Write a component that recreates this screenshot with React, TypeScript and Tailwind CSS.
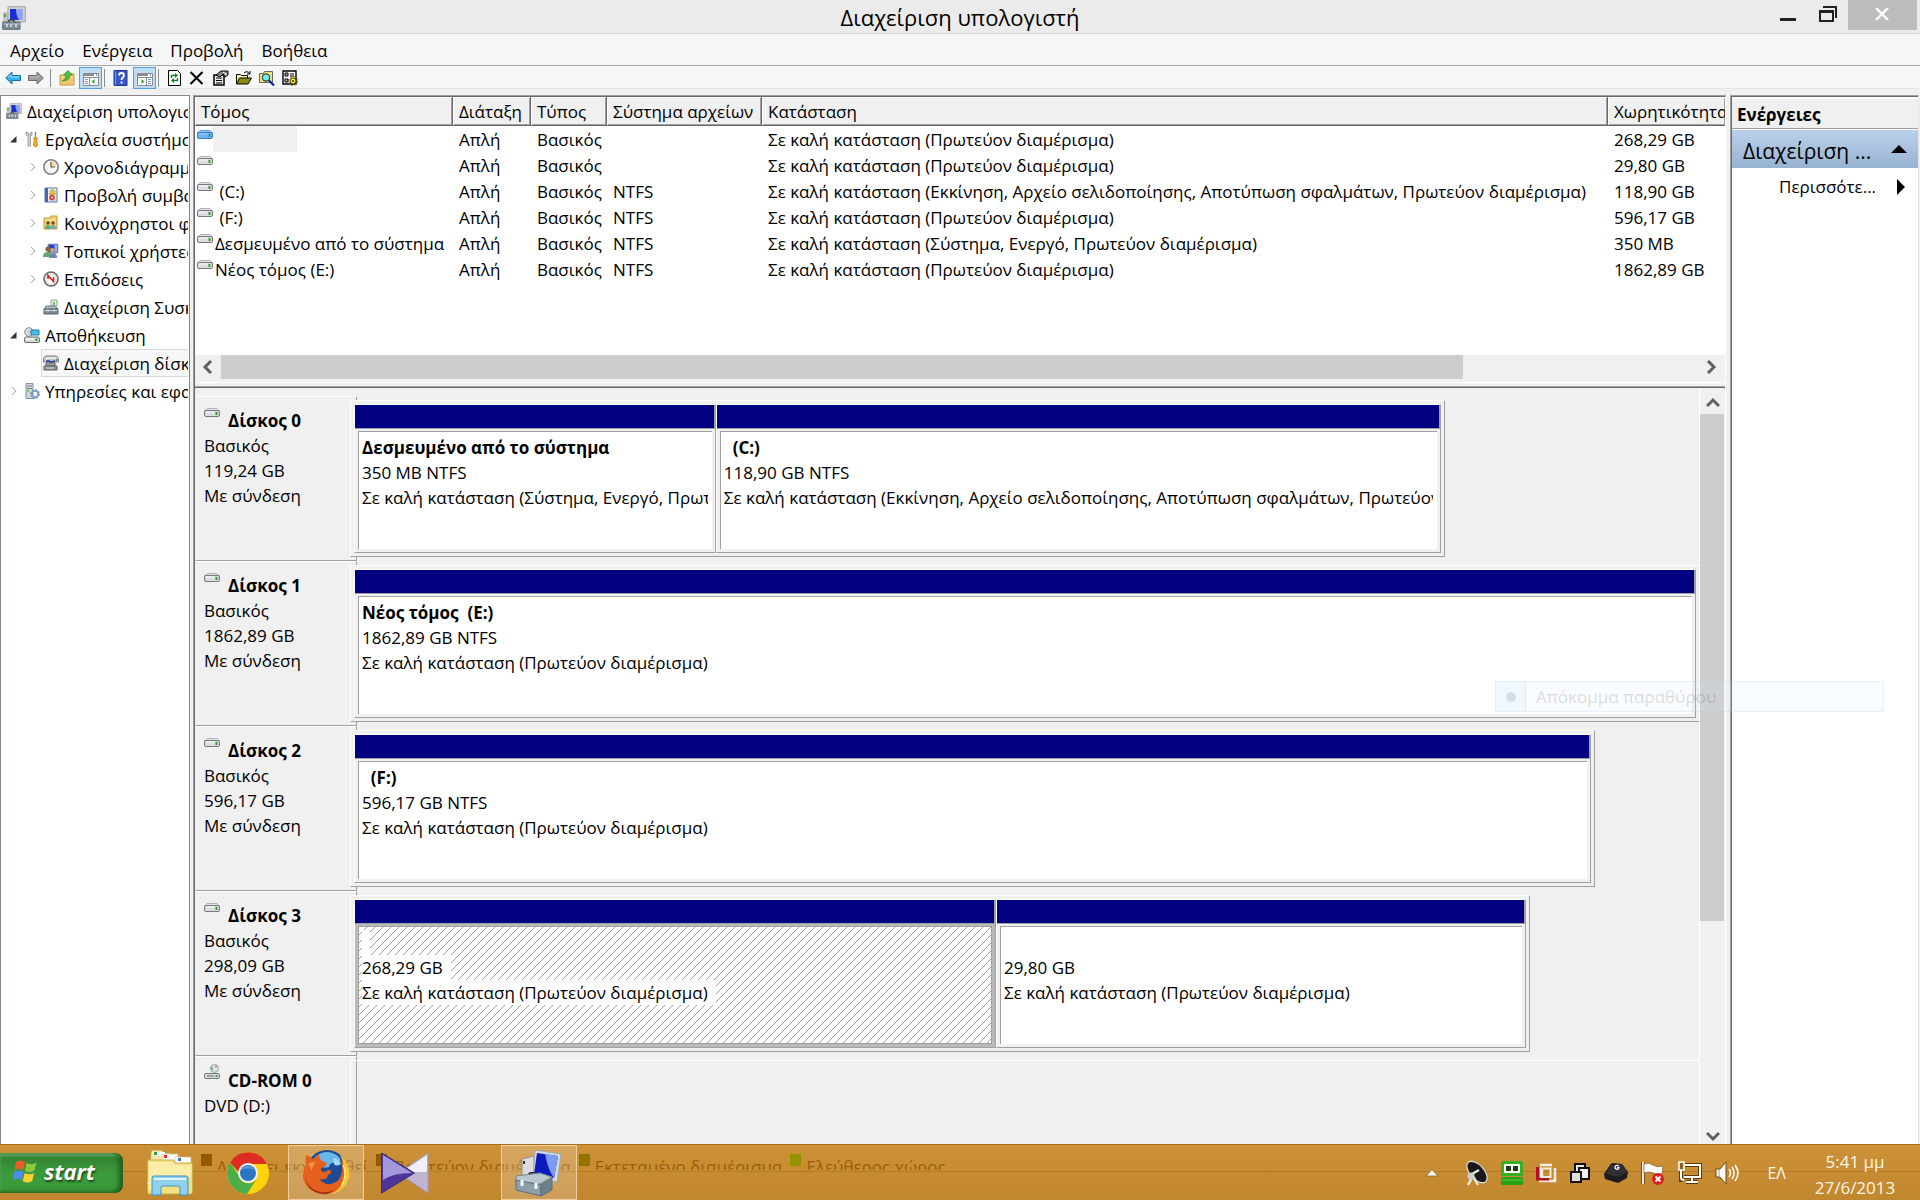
import React from 'react';

interface Volume {
  name: string;
  fs: string;
  status: string;
  capacity: string;
  selected?: boolean;
}

interface Partition {
  title: string;
  size: string;
  status: string;
  grow: number;
  selected?: boolean;
}

interface Disk {
  name: string;
  size: string;
  width: number;
  partitions: Partition[];
}

interface TreeItem {
  label: string;
  level: 0 | 1 | 2;
  expander?: 'open' | 'closed';
  icon: React.ReactNode;
  selected?: boolean;
}

const HEALTHY = 'Σε καλή κατάσταση (Πρωτεύον διαμέρισμα)';
const HEALTHY_BOOT = 'Σε καλή κατάσταση (Εκκίνηση, Αρχείο σελιδοποίησης, Αποτύπωση σφαλμάτων, Πρωτεύον διαμέρισμα)';
const HEALTHY_SYSTEM = 'Σε καλή κατάσταση (Σύστημα, Ενεργό, Πρωτεύον διαμέρισμα)';

const volumes: Volume[] = [
  { name: '', fs: '', status: HEALTHY, capacity: '268,29 GB', selected: true },
  { name: '', fs: '', status: HEALTHY, capacity: '29,80 GB' },
  { name: ' (C:)', fs: 'NTFS', status: HEALTHY_BOOT, capacity: '118,90 GB' },
  { name: ' (F:)', fs: 'NTFS', status: HEALTHY, capacity: '596,17 GB' },
  { name: 'Δεσμευμένο από το σύστημα', fs: 'NTFS', status: HEALTHY_SYSTEM, capacity: '350 MB' },
  { name: 'Νέος τόμος (E:)', fs: 'NTFS', status: HEALTHY, capacity: '1862,89 GB' },
];

// width is the share of the graphical view, in percent
const disks: Disk[] = [
  {
    name: 'Δίσκος 0',
    size: '119,24 GB',
    width: 81.2,
    partitions: [
      { title: 'Δεσμευμένο από το σύστημα', size: '350 MB NTFS', status: HEALTHY_SYSTEM, grow: 361 },
      { title: '  (C:)', size: '118,90 GB NTFS', status: HEALTHY_BOOT, grow: 726 },
    ],
  },
  {
    name: 'Δίσκος 1',
    size: '1862,89 GB',
    width: 100.1,
    partitions: [{ title: 'Νέος τόμος  (E:)', size: '1862,89 GB NTFS', status: HEALTHY, grow: 1 }],
  },
  {
    name: 'Δίσκος 2',
    size: '596,17 GB',
    width: 92.3,
    partitions: [{ title: '  (F:)', size: '596,17 GB NTFS', status: HEALTHY, grow: 1 }],
  },
  {
    name: 'Δίσκος 3',
    size: '298,09 GB',
    width: 87.5,
    partitions: [
      { title: '', size: '268,29 GB', status: HEALTHY, grow: 642, selected: true },
      { title: '', size: '29,80 GB', status: HEALTHY, grow: 530 },
    ],
  },
];

const columns = ['Τόμος', 'Διάταξη', 'Τύπος', 'Σύστημα αρχείων', 'Κατάσταση', 'Χωρητικότητα'];

function DriveIcon({ blue = false }: { blue?: boolean }) {
  return (
    <svg width="16" height="9" viewBox="0 0 16 9" className="shrink-0">
      <path d="M3 .5h10l2.5 2.5H.5z" fill={blue ? '#8cc4f4' : '#e4e4e8'} stroke={blue ? '#5a9edc' : '#b4b4b8'} />
      <rect x=".5" y="2.5" width="15" height="6" rx="1.5" fill={blue ? '#6fb2ee' : '#dcdce2'} stroke={blue ? '#3c7cc0' : '#77777c'} />
      <path d="M2 4h8" stroke={blue ? '#a8d4fa' : '#fff'} />
      <path d="M12.5 4v3" stroke={blue ? '#2c8ca0' : '#35a020'} strokeWidth="2" />
    </svg>
  );
}

function CdIcon() {
  return (
    <svg width="16" height="16" viewBox="0 0 16 16" className="shrink-0">
      <circle cx="10.5" cy="4.5" r="4" fill="#d8dce0" stroke="#a0a4a8" />
      <path d="M10.5 4.5 7 3v3z" fill="#4cc860" />
      <path d="M10.5 4.5 12 1l1.5 1z" fill="#d070d0" />
      <circle cx="10.5" cy="4.5" r="1" fill="#fff" />
      <rect x=".5" y="9.5" width="15" height="5" rx="1.5" fill="#dcdce0" stroke="#77777c" />
      <path d="M3 12h7" stroke="#66666a" />
      <path d="M12.5 11v2" stroke="#35a020" strokeWidth="2" />
    </svg>
  );
}

function ComputerIcon({ size = 16 }: { size?: number }) {
  return (
    <svg width={size} height={size} viewBox="0 0 24 24" className="shrink-0">
      <path d="M1 6h6v12H1z" fill="#c0c4c8" />
      <path d="M2 8h2v3H2z" fill="#3cb030" />
      <path d="M6 .7h17.3V16H6z" fill="#d4d4cc" stroke="#a4a498" />
      <path d="M8 3h13v11H8z" fill="#1a2cd8" />
      <path d="M14 3h7v11h-4q-3-4-3-11z" fill="#8ea4f4" />
      <path d="M6 16q3-5 7 0" fill="none" stroke="#333" strokeWidth="1.5" />
      <path d="M.7 16H18v7.3H.7z" fill="#7c8c94" stroke="#5c6c74" />
      <path d="M1 18h17" stroke="#b0bcc4" />
      <path d="M5 18v3M9 18v3M14 18v3" stroke="#dce4e8" strokeWidth="1.5" />
    </svg>
  );
}

function ToolsIcon() {
  return (
    <svg width="16" height="16" viewBox="0 0 16 16">
      <path d="M2 1v3l2 1.5V15h2.5V5.5L8 4V1L6.500 2v2h-2V2z" fill="#d0d4d8" stroke="#8a8e92" strokeWidth=".8" />
      <path d="M11.5 1v7" stroke="#8a8e92" strokeWidth="1.5" />
      <path d="M9.500 7h4l-.8 2 .8 5-1 1.500h-2l-1-1.500.8-5z" fill="#f4b020" stroke="#c07c08" strokeWidth=".8" />
    </svg>
  );
}

function ClockIcon() {
  return (
    <svg width="16" height="16" viewBox="0 0 16 16">
      <circle cx="8" cy="8" r="7.2" fill="#f4f4f0" stroke="#808488" strokeWidth="1.6" />
      <path d="M8 8V2.500A5.500 5.500 0 0 1 13.500 8z" fill="#f8dc9c" />
      <path d="M8 3v5h4" fill="none" stroke="#555" strokeWidth="1.2" />
    </svg>
  );
}

function EventIcon() {
  return (
    <svg width="16" height="16" viewBox="0 0 16 16">
      <path d="M2 1h12v14H2z" fill="#f0f4fa" stroke="#5a78a8" />
      <path d="M2 1h3v14H2z" fill="#4a68a0" />
      <path d="M6 4h7M6 7h7M6 13h7" stroke="#9cb0cc" />
      <path d="m9.500 2 3 5h-6z" fill="#f8c820" stroke="#b08808" strokeWidth=".6" />
      <circle cx="9" cy="10.5" r="2.8" fill="#d83828" />
      <path d="m8 9.500 2 2m0-2-2 2" stroke="#fff" strokeWidth=".9" />
    </svg>
  );
}

function SharedIcon() {
  return (
    <svg width="16" height="16" viewBox="0 0 16 16">
      <path d="M1 3h6l1-2h6v13H1z" fill="#f0cc70" stroke="#c49a38" />
      <path d="M2 5h11" stroke="#fce8b0" />
      <circle cx="5" cy="8" r="1.7" fill="#704828" />
      <circle cx="10" cy="8" r="1.7" fill="#704828" />
      <path d="M2 14q0-4 3-4t3 4z" fill="#58b468" />
      <path d="M7 14q0-4 3-4t3 4z" fill="#78a8b8" />
    </svg>
  );
}

function UsersIcon() {
  return (
    <svg width="16" height="16" viewBox="0 0 16 16">
      <path d="M5 1h10v9H5z" fill="#2840c8" stroke="#b4b8c0" />
      <path d="M11 2h3v7h-2z" fill="#90a8f0" />
      <circle cx="5" cy="6" r="2.6" fill="#8c6438" />
      <circle cx="9.5" cy="7.5" r="2.4" fill="#c8a070" />
      <path d="M0 14q0-5 5-5 3 0 4 5z" fill="#60a868" />
      <path d="M6 15q0-5 4-5t4 5z" fill="#6888b0" />
    </svg>
  );
}

function PerformanceIcon() {
  return (
    <svg width="16" height="16" viewBox="0 0 16 16">
      <circle cx="8" cy="8" r="7" fill="#fff" stroke="#6c6866" strokeWidth="1.6" />
      <circle cx="8" cy="8" r="5.3" fill="none" stroke="#c8c4c0" strokeWidth=".8" />
      <path d="M5 8V4.500l5.500 6V6" fill="none" stroke="#d82020" strokeWidth="1.6" />
    </svg>
  );
}

function DeviceIcon() {
  return (
    <svg width="16" height="16" viewBox="0 0 16 16">
      <path d="M8 1h6v6H8z" fill="#e8ece8" stroke="#98a098" />
      <path d="M11 3v3" stroke="#38b028" strokeWidth="1.5" />
      <path d="M3 7h9l3 3H1z" fill="#b4c0c8" stroke="#6c7c84" />
      <path d="M1 10h14v5H1z" fill="#7c8c94" stroke="#56666e" />
      <path d="M1.500 11.500h13M5 10v3M11 10v3" stroke="#c4d0d6" />
    </svg>
  );
}

function StorageIcon() {
  return (
    <svg width="16" height="16" viewBox="0 0 16 16">
      <circle cx="5" cy="5" r="4.3" fill="#d8dce0" stroke="#8c9094" />
      <circle cx="5" cy="5" r="1.2" fill="#fff" stroke="#999" strokeWidth=".6" />
      <path d="M7 3h8v5H7z" fill="#48b8e4" stroke="#2c7ca8" />
      <rect x=".5" y="10" width="15" height="5.5" rx="1.5" fill="#d8dade" stroke="#68686c" />
      <path d="M2 12h8" stroke="#fff" />
      <path d="M12.500 11.500v2.500" stroke="#35a020" strokeWidth="2" />
    </svg>
  );
}

function DiskMgmtIcon() {
  return (
    <svg width="16" height="16" viewBox="0 0 16 16">
      <path d="M2.500 1h11l2 2.500v3.500H.5V3.500z" fill="#c8ccce" stroke="#78787c" />
      <path d="M3 3h10" stroke="#fff" />
      <path d="M3 6h3l2 1 4-1" stroke="#283890" strokeWidth="1.4" fill="none" />
      <path d="M13.500 4v2" stroke="#35a020" strokeWidth="1.5" />
      <path d="M3 8h9v3H3z" fill="#a4a8aa" stroke="#606064" />
      <path d="M1 11h13v4H1z" fill="#8c9092" stroke="#606064" />
      <path d="M3 13h8" stroke="#e0e0e0" />
    </svg>
  );
}

function ServicesIcon() {
  return (
    <svg width="16" height="16" viewBox="0 0 16 16">
      <path d="M2 .5h7v15H2z" fill="#d0d6da" stroke="#889298" />
      <path d="M3 3h5M3 5.500h5" stroke="#708088" />
      <path d="M3.500 8h1.500" stroke="#38b028" strokeWidth="1.5" />
      <circle cx="11" cy="11" r="3.2" fill="none" stroke="#7ca0c8" strokeWidth="2" />
      <circle cx="11" cy="11" r="4.5" fill="none" stroke="#7ca0c8" strokeWidth="1.2" strokeDasharray="1.8 1.7" />
    </svg>
  );
}

const tree: TreeItem[] = [
  { label: 'Διαχείριση υπολογιστή (Τοπικός)', level: 0, icon: <ComputerIcon /> },
  { label: 'Εργαλεία συστήματος', level: 1, expander: 'open', icon: <ToolsIcon /> },
  { label: 'Χρονοδιάγραμμα εργασιών', level: 2, expander: 'closed', icon: <ClockIcon /> },
  { label: 'Προβολή συμβάντων', level: 2, expander: 'closed', icon: <EventIcon /> },
  { label: 'Κοινόχρηστοι φάκελοι', level: 2, expander: 'closed', icon: <SharedIcon /> },
  { label: 'Τοπικοί χρήστες και ομάδες', level: 2, expander: 'closed', icon: <UsersIcon /> },
  { label: 'Επιδόσεις', level: 2, expander: 'closed', icon: <PerformanceIcon /> },
  { label: 'Διαχείριση Συσκευών', level: 2, icon: <DeviceIcon /> },
  { label: 'Αποθήκευση', level: 1, expander: 'open', icon: <StorageIcon /> },
  { label: 'Διαχείριση δίσκων', level: 2, icon: <DiskMgmtIcon />, selected: true },
  { label: 'Υπηρεσίες και εφαρμογές', level: 1, expander: 'closed', icon: <ServicesIcon /> },
];

const indents = ['pl-[3px]', 'pl-2', 'pl-[27px]'];

function TreeRow({ item }: { item: TreeItem }) {
  return (
    <li className={`flex h-7 items-center ${indents[item.level]}`}>
      {item.level > 0 && (
        <span className="flex w-[13px] shrink-0 items-center">
          {item.expander === 'open' && (
            <svg width="8" height="8" viewBox="0 0 8 8"><path d="M7.500 1v6.500H1z" fill="#333" /></svg>
          )}
          {item.expander === 'closed' && (
            <svg width="8" height="10" viewBox="0 0 8 10"><path d="m3 1 4 4-4 4" fill="none" stroke="#a6a6a6" /></svg>
          )}
        </span>
      )}
      <button className={`flex h-full min-w-0 flex-1 items-center gap-1 overflow-hidden border border-r-0 text-left whitespace-nowrap ${item.selected ? 'border-[#dadada] bg-[#f7f7f7]' : 'border-transparent'}`}>
        <span className="flex w-[18px] shrink-0 justify-center">{item.icon}</span>
        <span className="pt-0.5">{item.label}</span>
      </button>
    </li>
  );
}

function ToolSep() {
  return <span className="h-[18px] w-px bg-[#8e8e8e]" />;
}

function Toolbar() {
  const toggle = 'flex h-[22px] w-[23px] items-center justify-center border border-[#569de5] bg-[#c0dcf3] pt-0.5';
  return (
    <div className="flex h-[23px] items-center border-b border-[#e4e6e9] bg-[#f5f6f8] pt-0.5 pl-[5px]">
      <button aria-label="Πίσω">
        <svg width="16" height="16" viewBox="0 0 16 16"><path d="M.7 8 7 2v3.500h8.500v5H7V14z" fill="#35b0ec" stroke="#1c6ca8" /><path d="M3 7.500 6 5v2h8" fill="none" stroke="#9ce0fc" /></svg>
      </button>
      <button aria-label="Μπροστά" className="ml-[7px]">
        <svg width="16" height="16" viewBox="0 0 16 16"><path d="M15.300 8 9 2v3.500H.5v5H9V14z" fill="#9c9c9c" stroke="#6c6c6c" /><path d="M2 7h8V5" fill="none" stroke="#c4c4c4" /></svg>
      </button>
      <span className="ml-1.5 flex"><ToolSep /></span>
      <button aria-label="Επάνω" className="ml-2">
        <svg width="16" height="16" viewBox="0 0 16 16"><path d="M1 5h5l1-1h8v11H1z" fill="#f0c870" stroke="#c8983c" /><path d="M3 7h11" stroke="#fce4a8" /><path d="M3 11q4-1 4-6H4.500L9 .5l4.500 4.500H11q0 6-8 6z" fill="#50c040" stroke="#2c8c24" strokeWidth=".7" /></svg>
      </button>
      <button aria-label="Δέντρο κονσόλας" className={`ml-1 ${toggle}`}>
        <svg width="16" height="14" viewBox="0 1 16 14"><path d="M.5 2.500h15v12H.5z" fill="#fff" stroke="#8a8e94" /><path d="M1 4h10M13 4h1" stroke="#8c8c90" strokeWidth="2" /><path d="M1 6.500h14M6.500 7v7" stroke="#8a8e94" /><path d="M2 8.500h3M2 10.500h3M2 12.500h3" stroke="#7898c0" /><path d="M11.500 8v5L8.500 10.500z" fill="#38a828" /></svg>
      </button>
      <span className="ml-0.5 flex"><ToolSep /></span>
      <button aria-label="Βοήθεια" className="ml-2">
        <svg width="16" height="16" viewBox="0 0 16 16"><path d="M1 .5h13v15H1z" fill="#3858c8" stroke="#1c3488" /><path d="M2.500 1v14" stroke="#7c98ec" /><path d="M6 5.500q0-2.500 2.500-2.500T11 5.500C11 7.500 8.500 7.500 8.500 10M8.500 11.500v2" fill="none" stroke="#fff" strokeWidth="1.8" /></svg>
      </button>
      <button aria-label="Παράθυρο ενεργειών" className={`ml-1 ${toggle}`}>
        <svg width="16" height="14" viewBox="0 1 16 14"><path d="M.5 2.500h15v12H.5z" fill="#fff" stroke="#8a8e94" /><path d="M1 4h10M13 4h1" stroke="#8c8c90" strokeWidth="2" /><path d="M1 6.500h14M9.500 7v7" stroke="#8a8e94" /><path d="M11 8.500h3M11 10.500h3M11 12.500h3" stroke="#7898c0" /><path d="M4.500 8v5l3-2.500z" fill="#38a828" /></svg>
      </button>
      <span className="ml-0.5 flex"><ToolSep /></span>
      <button aria-label="Ανανέωση" className="ml-2">
        <svg width="16" height="16" viewBox="0 0 16 16"><path d="M1.500.5h9l3 3v12h-12z" fill="#fff" stroke="#000" /><path d="M4.500 8V5.500H9M10.500 8v2.500H6" fill="none" stroke="#108820" strokeWidth="1.4" /><path d="m8 3 3 2.500L8 8zM7 8l-3 2.500L7 13z" fill="#108820" /></svg>
      </button>
      <button aria-label="Διαγραφή" className="ml-1.5">
        <svg width="16" height="16" viewBox="0 0 16 16"><path d="m1.500 2 12 12M13.500 2l-12 12" stroke="#000" strokeWidth="2" /></svg>
      </button>
      <button aria-label="Ιδιότητες" className="ml-2">
        <svg width="16" height="16" viewBox="0 0 16 16"><path d="M1 5h10v10H1z" fill="#e8e8e8" stroke="#000" strokeWidth="1.5" /><path d="M3 8h6M3 10.500h6M3 13h6" stroke="#000" /><path d="M3 5 8 1h7v4l-3 2-2-3-3 3z" fill="#888" stroke="#000" /><path d="m10 2 4 3" stroke="#fff" /></svg>
      </button>
      <button aria-label="Άνοιγμα" className="ml-[7px]">
        <svg width="16" height="16" viewBox="0 0 16 16"><path d="M.5 14V4.500h4l1 1h6V8" fill="#f8f0a0" stroke="#000" /><path d="m.5 14 3-6h12l-3.500 6z" fill="#8c8c10" stroke="#000" /><path d="M8 3q3-3 6 1m0-3v3h-3" fill="none" stroke="#000" /></svg>
      </button>
      <button aria-label="Αναζήτηση" className="ml-[7px]">
        <svg width="16" height="16" viewBox="0 0 16 16"><path d="M.5 3.500h4l1-2h8v11H.5z" fill="#f0e078" stroke="#666" /><circle cx="7" cy="7.5" r="3.7" fill="#70ecf4" stroke="#222" /><path d="m10 10.500 5 5" stroke="#1020a0" strokeWidth="2.2" /></svg>
      </button>
      <button aria-label="Ρυθμίσεις" className="ml-[7px]">
        <svg width="16" height="16" viewBox="0 0 16 16"><path d="M1 1h13v13H1z" fill="#fff" stroke="#000" strokeWidth="1.4" /><path d="M3 3h3v3H3zM3 9h3v3H3z" fill="#aaa" stroke="#000" /><path d="M8 4h4M8 6h4" stroke="#000" /><circle cx="11" cy="11" r="3" fill="#f4e428" stroke="#222" strokeWidth=".8" /><circle cx="11" cy="11" r="4.3" fill="none" stroke="#6c6408" strokeWidth="1.2" strokeDasharray="1.7 1.7" /><circle cx="11" cy="11" r="1" fill="#333" /></svg>
      </button>
    </div>
  );
}

function VolumeTable() {
  return (
    <table className="w-full table-fixed border-separate border-spacing-0 text-left whitespace-nowrap">
      <colgroup>
        <col className="w-[258px]" />
        <col className="w-[78px]" />
        <col className="w-[76px]" />
        <col className="w-[155px]" />
        <col />
        <col className="w-[117px]" />
      </colgroup>
      <thead>
        <tr>
          {columns.map((c) => (
            <th key={c} className="h-[29px] overflow-hidden border-r border-b border-[#696969] bg-[#f0f0f0] p-0 pt-0.5 pl-1.5 font-normal shadow-[inset_1px_1px_#fff,inset_-1px_-1px_#a0a0a0] last:border-r-0">
              {c}
            </th>
          ))}
        </tr>
      </thead>
      <tbody>
        {volumes.map((v, i) => (
          <tr key={i}>
            <td className="h-[26px] p-0 pl-0.5">
              <div className="flex h-[26px]">
                <span className="mt-1 w-4 shrink-0"><DriveIcon blue={v.selected} /></span>
                {v.selected && <span className="h-full w-[84px] bg-[#f0f0f0]" />}
                <span className="pt-px pl-0.5 leading-[26px] whitespace-pre">{v.name}</span>
              </div>
            </td>
            <td className="p-0 pt-0.5 pl-1.5">Απλή</td>
            <td className="p-0 pt-0.5 pl-1.5">Βασικός</td>
            <td className="p-0 pt-0.5 pl-1.5">{v.fs}</td>
            <td className="overflow-hidden p-0 pt-0.5 pl-1.5">{v.status}</td>
            <td className="p-0 pt-0.5 pl-1.5">{v.capacity}</td>
          </tr>
        ))}
      </tbody>
    </table>
  );
}

function Hatch() {
  return (
    <svg className="absolute inset-0 size-full">
      <pattern id="hatch" width="8" height="8" patternUnits="userSpaceOnUse">
        <path d="M-1 9 9-1M-1 1l2-2M7 9l2-2" stroke="#888" strokeWidth=".8" />
      </pattern>
      <rect width="100%" height="100%" fill="url(#hatch)" />
    </svg>
  );
}

function PartitionBox({ part }: { part: Partition }) {
  const mask = part.selected ? 'w-fit max-w-full bg-white pr-2' : '';
  return (
    <div
      className="flex min-w-0 basis-0 flex-col border border-t-white border-r-[#a0a0a0] border-b-[#a0a0a0] border-l-white"
      style={{ flexGrow: part.grow }}
    >
      <div className="h-6 shrink-0 border-r border-b border-[#a0a0a0] bg-[#000080]" />
      <div className={`flex flex-1 p-[3px] pt-0.5 ${part.selected ? 'bg-[#b9b9b9]' : 'bg-[#f0f0f0]'}`}>
        <div className={`relative min-w-0 flex-1 overflow-hidden border-t border-l border-[#a0a0a0] bg-white py-[3px] pr-1 pl-[3px] leading-[25px] whitespace-pre ${part.selected ? 'border-r border-b' : ''}`}>
          {part.selected && <Hatch />}
          <div className={`relative h-[25px] overflow-hidden font-bold ${mask}`}>{part.title}</div>
          <div className={`relative overflow-hidden ${mask}`}>{part.size}</div>
          <div className={`relative overflow-hidden ${mask}`}>{part.status}</div>
        </div>
      </div>
    </div>
  );
}

function DiskRow({ disk }: { disk: Disk }) {
  return (
    <div className="flex h-[165px] shrink-0">
      <div className="w-[162px] shrink-0 border border-t-white border-r-[#a0a0a0] border-b-[#a0a0a0] border-l-transparent pt-[11px] pl-2 leading-[25px]">
        <div className="flex gap-2">
          <DriveIcon />
          <b>{disk.name}</b>
        </div>
        <div>Βασικός</div>
        <div>{disk.size}</div>
        <div>Με σύνδεση</div>
      </div>
      <div className="relative mt-1 mb-1 -ml-[7px] min-w-0 flex-1">
        <div
          className="flex h-[157px] border border-t-white border-r-[#a0a0a0] border-b-[#a0a0a0] border-l-white bg-[#f0f0f0] p-[3px]"
          style={{ width: `${disk.width}%` }}
        >
          {disk.partitions.map((p, i) => <PartitionBox key={i} part={p} />)}
        </div>
      </div>
    </div>
  );
}

function Chevron({ d }: { d: string }) {
  return (
    <svg width="14" height="14" viewBox="0 0 14 14">
      <path d={d} fill="none" stroke="#606060" strokeWidth="3" />
    </svg>
  );
}

function FlagLogo() {
  return (
    <svg width="26" height="26" viewBox="0 0 26 26">
      <path d="M4 4q5-3 9 0l-1.500 8q-4-3-9 0z" fill="#f05a28" />
      <path d="M14.500 5q5 2.500 10-.5l-2 8q-5 3-9.500.5z" fill="#8cc83c" />
      <path d="M2.200 14q5-3 9 0L9.500 22q-4-3-9 0z" fill="#4a8cf0" />
      <path d="M12.700 15q5 2.500 9.500 0l-2 8q-5 3-9.500 0z" fill="#fcd030" />
    </svg>
  );
}

function ExplorerIcon() {
  return (
    <svg width="48" height="48" viewBox="0 0 48 48">
      <path d="M5 3q0-2 2-2h9l2 3h6v12H4z" fill="#f4e8a8" stroke="#b8a050" />
      <path d="M7 3h12v4H7z" fill="#fff" /><path d="M8 3h3v3H8z" fill="#2ca040" />
      <path d="M16 5h16v7H16z" fill="#fff" stroke="#d0c080" strokeWidth=".6" /><path d="M18 6h3v3h-3z" fill="#e03020" />
      <path d="M29 8h16v7H29z" fill="#fff" stroke="#d0c080" strokeWidth=".6" /><path d="M32 9h3v3h-3z" fill="#2c80d8" />
      <path d="M1.500 11h26l2 3h17v29q0 2-2 2h-42q-1-1-1-3z" fill="#f2e084" stroke="#c8ac4c" />
      <path d="M3 13h23l2 3h17v12L3 40z" fill="#faf0b0" opacity=".8" />
      <path d="M9 21v24M1 34h16M3 28l12 12M15 28 3 40" stroke="#fff" opacity=".7" />
      <path d="M6 46V29q0-2 2-2h32q2 0 2 2v17h-8v-7q0-2-2-2H17q-2 0-2 2v7z" fill="#90d0ec" stroke="#3c94c4" />
      <path d="M8 30h32" stroke="#dcf4fc" strokeWidth="2" />
    </svg>
  );
}

function ChromeIcon() {
  return (
    <svg width="44" height="44" viewBox="0 0 44 44">
      <circle cx="22" cy="22" r="21" fill="#fcd20c" />
      <path d="M4 11.500A21 21 0 0 1 41 13H22a10 10 0 0 0-9.500 8z" fill="#dc2c24" />
      <path d="M4 11.500A21 21 0 0 0 21 43l9.500-15a10 10 0 0 1-18-4z" fill="#4cae48" />
      <circle cx="22" cy="22" r="10" fill="#f4f4f4" />
      <circle cx="22" cy="22" r="8" fill="#2c74c4" />
      <path d="M15 19a8 8 0 0 1 14 0q-7-3-14 0z" fill="#5894d8" />
    </svg>
  );
}

function FirefoxIcon() {
  return (
    <svg width="48" height="48" viewBox="0 0 48 48">
      <circle cx="25" cy="21" r="20" fill="#1c4c94" />
      <path d="M13 8Q25-2 37 8q4 6-3 6-6-1-7 4-6 2-9-2-4-1-5-8z" fill="#68b8ec" />
      <path d="M31 9q6 1 8 6-5 3-7 0z" fill="#a4dcf8" />
      <path d="M4 6q4 1 6 4 4-1 7-5 0 5 3 7 4 1 5 3-3 4-6 4 0 3 2 4 3 0 5-2 4 0 3 3-4 2-4 5-5 3-8 0 4 7 12 6 10-2 11-13 1-6-2-12 8 8 6 18-3 15-19 16Q4 45 1 28q0-8 3-12-1-5 0-10z" fill="#e4601c" />
      <path d="M38 6q11 9 9 23-4 13-17 16 11-7 12-18 1-12-4-21z" fill="#fcc430" />
      <path d="M41 16q5 10-1 20" fill="none" stroke="#fff0a0" strokeWidth="1.5" />
      <path d="M3 26q1 13 15 17 8 1 14-2-4 5-12 4Q4 43 3 26z" fill="#a82c10" />
      <path d="M6 15q4-3 8-1-4 2-4 8-2-5-4-7z" fill="#f89838" />
    </svg>
  );
}

function PlayerIcon() {
  return (
    <svg width="50" height="42" viewBox="0 0 50 42">
      <path d="M48 1v40L18 21z" fill="#c0b4d0" stroke="#a498b8" />
      <path d="M47 3v17L22 20z" fill="#f0eef6" />
      <path d="M1.500 1v40l33-20z" fill="#4c3498" stroke="#3c2c80" />
      <path d="M3 3v25q10-7 29-7z" fill="#a498dc" />
    </svg>
  );
}

function ConsoleIcon() {
  return (
    <svg width="48" height="48" viewBox="0 0 48 48">
      <path d="m7 10 12-3v24H7z" fill="#dcdcdc" stroke="#909090" />
      <path d="M8 12h2v3H8z" fill="#333" />
      <path d="m20 1 26 4-4 28-24-4z" fill="#d4dce0" stroke="#a0a8ac" />
      <path d="m22 4 21 3-4 22-20-4z" fill="#0c18c0" />
      <path d="m30 5 13 2-4 22q-6-8-9-24z" fill="#7c9cf4" />
      <path d="M13 28q1-8 13 0" fill="none" stroke="#222" strokeWidth="2" />
      <path d="m1 27 24-3 12 4-12 7L1 32z" fill="#b8c8d0" stroke="#788890" />
      <path d="m1 31 25 5v11L1 41z" fill="#8ca0ac" stroke="#5c707c" />
      <path d="m26 36 11-7v12l-11 6z" fill="#6c808c" stroke="#5c707c" />
      <path d="M7 31v6M21 34v6" stroke="#f4f4f4" strokeWidth="3" />
    </svg>
  );
}

function TrayIcons() {
  return (
    <>
      <button aria-label="Κρυφά εικονίδια" className="mr-3">
        <svg width="14" height="8" viewBox="0 0 14 8"><path d="m7 .5 6 6.500H1z" fill="#f4f4f0" stroke="#8a6428" strokeWidth=".8" /></svg>
      </button>
      <svg width="26" height="26" viewBox="0 0 26 26"><ellipse cx="14" cy="12" rx="7" ry="13" transform="rotate(-42 14 12)" fill="#181818" stroke="#d8d8d8" strokeWidth="1.3" /><path d="m9 14 7-4M5 25l5-9 5 9" stroke="#e8e8e8" strokeWidth="2.5" fill="none" /><circle cx="8" cy="16" r="3.5" fill="#ccc" /></svg>
      <svg width="22" height="24" viewBox="0 0 22 24"><rect width="22" height="15" rx="1.5" fill="#34b020" /><rect x="3" y="3" width="16" height="9" rx="1" fill="#fff" /><path d="M5 5h5v5H5zM12 5h5v5h-5z" fill="#1c3c18" /><rect y="16" width="22" height="8" rx="1.5" fill="#28a018" /><path d="M1 19h20" stroke="#60d048" /></svg>
      <svg width="22" height="22" viewBox="0 0 22 22"><path d="M5 3h12M7 14V6.500M20 6v13H4" fill="none" stroke="#f4ece4" strokeWidth="2.5" /><path d="M2.500 5v12H14" fill="none" stroke="#b01020" strokeWidth="3" /><path d="M6 5v10h9.500V6.500H8" fill="none" stroke="#f4ece4" strokeWidth="2" /></svg>
      <svg width="22" height="22" viewBox="0 0 22 22"><path d="M6 2h10v8H6z" fill="#e8e8e8" stroke="#111" strokeWidth="2" /><path d="M10 6h10v11H10z" fill="#f0f0f0" stroke="#111" strokeWidth="2" /><path d="M2 10h10v10H2z" fill="#ddd" stroke="#111" strokeWidth="2" /></svg>
      <svg width="26" height="22" viewBox="0 0 26 22"><path d="M7 3q1-2 3-2l9 1 6 8-1 6-9 5-13-4-1-5z" fill="#1c1c1e" /><path d="M8 3 3 12l13 3 8-5-5-8z" fill="#303034" /><path d="M16 4q-4-2-4 2 3 3 4-.5h-2" fill="none" stroke="#fff" strokeWidth="1.2" /></svg>
      <svg width="24" height="24" viewBox="0 0 24 24"><path d="M2 1v22" stroke="#5c3c08" strokeWidth="3.5" /><path d="M2 1v22" stroke="#fff" strokeWidth="1.8" /><path d="M3 3q5-2 9 1t10 1l-1 8q-5 1-9-1t-9 0z" fill="#fff" stroke="#7c5818" strokeWidth=".7" /><circle cx="17" cy="18" r="6" fill="#dc1c20" /><path d="m14.500 15.500 5 5m0-5-5 5" stroke="#fff" strokeWidth="2" /></svg>
      <svg width="26" height="24" viewBox="0 0 26 24"><g fill="none" stroke="#5c3c08" strokeWidth="4"><path d="M8 4h15v12H7M15 16v5M9 21h12M4 9v12" /></g><g fill="none" stroke="#fff" strokeWidth="2"><path d="M8 4h15v12H7M15 16v5M9 21h12M4 9v8q0 2 3 2" /></g><path d="M2 1h5v8H2z" fill="#8c6428" stroke="#fff" strokeWidth="1.5" /></svg>
      <svg width="24" height="24" viewBox="0 0 24 24"><path d="M1 8h4l6-7v22l-6-7H1z" fill="#fff" stroke="#6c4810" /><path d="M4 8v8" stroke="#999" /><path d="M14 8q3 4 0 8M17 6q4 6 0 12M20 4q6 8 0 16" fill="none" stroke="#fff" strokeWidth="1.5" /></svg>
    </>
  );
}

const legend = [
  { label: 'Δεν έχει εκχωρηθεί', color: 'bg-[#945a00]' },
  { label: 'Πρωτεύον διαμέρισμα', color: 'bg-[#945a00]' },
  { label: 'Εκτεταμένο διαμέρισμα', color: 'bg-[#947400]' },
  { label: 'Ελεύθερος χώρος', color: 'bg-[#949400]' },
];

function Taskbar() {
  const active = 'flex h-full w-[76px] items-center justify-center border border-[#f0cf9c] bg-white/20';
  return (
    <footer className="relative flex h-14 shrink-0 items-center border-t border-[#a56f1f] bg-linear-to-b from-[#cd9136] to-[#c1872f]">
      {/* legend of the disk view showing through the glass */}
      <div className="absolute top-0 left-[201px] flex h-[25px] gap-2 overflow-hidden whitespace-nowrap text-[#9a5d0a]">
        {legend.map((l) => (
          <span key={l.label} className="flex gap-[5px]">
            <i className={`mt-[9px] h-3 w-[11px] ${l.color}`} />
            <span className="pt-2.5">{l.label}</span>
          </span>
        ))}
      </div>
      <div className="absolute inset-x-0 top-[26px] h-px bg-[#b37a26]" />
      <button className="relative flex h-10 w-[123px] items-center gap-1.5 rounded-r-lg bg-linear-to-b from-[#2f7c2f] via-[#3c9a3c] to-[#3a9c38] pb-1 pl-3 text-[22px] font-bold text-white italic shadow-[inset_-4px_-1px_5px_#1d5c1d,inset_0_3px_3px_#69b069] [text-shadow:1px_2px_2px_#1c4a1c]">
        <FlagLogo />
        start
      </button>
      <div className="relative flex h-full items-center">
        <button aria-label="Explorer" className="ml-[23px]"><ExplorerIcon /></button>
        <button aria-label="Chrome" className="ml-8"><ChromeIcon /></button>
        <button aria-label="Firefox" className={`ml-[18px] ${active}`}><FirefoxIcon /></button>
        <button aria-label="Player" className="ml-4"><PlayerIcon /></button>
        <button aria-label="Διαχείριση υπολογιστή" className={`ml-[71px] ${active}`}><ConsoleIcon /></button>
      </div>
      <div className="relative ml-auto flex items-center gap-3 text-[#fdf6ea]">
        <TrayIcons />
        <span className="ml-4 text-base">ΕΛ</span>
        <time className="mr-5 ml-3 w-[90px] pt-1 text-center leading-[26px]">
          5:41 μμ
          <br />
          27/6/2013
        </time>
      </div>
    </footer>
  );
}

export default function App() {
  return (
    <div className="flex h-screen flex-col overflow-hidden bg-[#f0f0f0] font-['Open_Sans','Noto_Sans',sans-serif] text-[17px] leading-6 text-black">
      <header className="relative flex h-[34px] shrink-0 items-center justify-between border-b border-[#d6d8db] bg-[#ebebeb]">
        <span className="pt-0.5 pl-0.5"><ComputerIcon size={24} /></span>
        <h1 className="pointer-events-none absolute inset-x-0 text-center text-[22px]">Διαχείριση υπολογιστή</h1>
        <div className="relative flex h-full pr-[3px]">
          <button aria-label="Ελαχιστοποίηση" className="flex w-10 justify-center pt-[18px]"><span className="h-[3px] w-4 bg-[#222]" /></button>
          <button aria-label="Επαναφορά" className="flex w-10 justify-center pt-1.5">
            <svg width="18" height="16" viewBox="0 0 18 16"><path d="M4 1h13v11" fill="none" stroke="#222" strokeWidth="2" /><path d="M1 5h13v10H1z" fill="none" stroke="#222" strokeWidth="2" /><path d="M1 5.500h13" stroke="#222" strokeWidth="3" /></svg>
          </button>
          <button aria-label="Κλείσιμο" className="flex h-[30px] w-[69px] items-center justify-center bg-[#bcbcbc] pr-0.5 pb-0.5">
            <svg width="14" height="12" viewBox="0 0 14 12"><path d="m1 0 12 12M13 0 1 12" stroke="#fff" strokeWidth="2.4" /></svg>
          </button>
        </div>
      </header>
      <nav className="flex h-8 shrink-0 items-center gap-[18px] border-b border-[#ababab] bg-[#f5f6f8] pt-0.5 pl-2.5">
        <button>Αρχείο</button>
        <button>Ενέργεια</button>
        <button>Προβολή</button>
        <button>Βοήθεια</button>
      </nav>
      <Toolbar />

      <main className="flex min-h-0 flex-1 gap-[3px] pt-1.5 pr-px">
        <aside className="w-[190px] shrink-0 border border-b-0 border-[#828790] bg-white pt-px pr-px">
          <ul>{tree.map((t) => <TreeRow key={t.label} item={t} />)}</ul>
        </aside>

        <section className="mr-px flex min-w-0 flex-1 flex-col border-t border-l border-[#a0a0a0]">
          <div className="flex min-h-0 flex-1 flex-col border-t border-r border-l border-t-[#696969] border-r-white border-l-[#696969]">
            <div className="flex h-[285px] shrink-0 flex-col overflow-hidden bg-white">
              <VolumeTable />
              <div className="mt-auto flex h-[27px] shrink-0 bg-[#f0f0f0] pb-[3px]">
                <button aria-label="Κύλιση αριστερά" className="flex w-[26px] items-center justify-center"><Chevron d="m10 1-6 6 6 6" /></button>
                <div className="flex-1"><div className="h-full w-[84%] bg-[#cdcdcd]" /></div>
                <button aria-label="Κύλιση δεξιά" className="flex w-[26px] items-center justify-center pr-0.5"><Chevron d="m4 1 6 6-6 6" /></button>
              </div>
            </div>
            <div className="h-1.5 shrink-0 border-t border-b border-t-white border-b-[#696969] bg-[#f0f0f0] shadow-[inset_0_-1px_#a0a0a0]" />
            <div className="flex min-h-0 flex-1">
              <div className="min-w-0 flex-1 overflow-hidden border-r border-white pt-2">
                {disks.map((d) => <DiskRow key={d.name} disk={d} />)}
                <div className="flex h-[165px]">
                  <div className="w-[162px] shrink-0 border-t border-r border-t-white border-r-[#a0a0a0] pt-[7px] pl-[9px] leading-[25px]">
                    <div className="flex gap-2">
                      <CdIcon />
                      <b className="pt-1">CD-ROM 0</b>
                    </div>
                    <div>DVD (D:)</div>
                  </div>
                  <div className="mt-1 -ml-[7px] flex-1 border-t border-l border-white" />
                </div>
              </div>
              <div className="flex w-[25px] shrink-0 flex-col">
                <button aria-label="Κύλιση επάνω" className="flex h-[26px] items-center justify-center pt-1"><Chevron d="m1 10 6-6 6 6" /></button>
                <div className="flex-1"><div className="h-[71%] w-6 bg-[#cdcdcd]" /></div>
                <button aria-label="Κύλιση κάτω" className="flex h-4 items-center justify-center"><Chevron d="m1 4 6 6 6-6" /></button>
              </div>
            </div>
          </div>
        </section>

        <aside className="w-[189px] shrink-0 border-t border-r border-l border-t-[#a0a0a0] border-r-[#e3e3e3] border-l-[#a0a0a0]">
          <div className="h-full border-t border-l border-[#696969] bg-white">
            <h2 className="flex h-8 items-center border-t-2 border-b border-t-white border-b-[#a0a0a0] bg-[#f0f0f0] pt-[3px] pl-[5px] font-bold">Ενέργειες</h2>
            <button className="mt-px flex h-[38px] w-full items-center justify-between bg-linear-to-b from-[#b9d1ea] to-[#98b3d2] pt-1 pr-[11px] pl-[11px] text-[21px]">
              Διαχείριση ...
              <svg width="16" height="8" viewBox="0 0 16 8" className="mb-1"><path d="m8 0 8 8H0z" /></svg>
            </button>
            <button className="flex h-[37px] w-full items-center justify-between pr-[13px] pl-[47px]">
              Περισσότε...
              <svg width="8" height="16" viewBox="0 0 8 16"><path d="M0 0v16l8-8z" /></svg>
            </button>
          </div>
        </aside>
      </main>

      <Taskbar />

      {/* menu entry fading out */}
      <div className="pointer-events-none absolute top-[681px] right-9 flex h-[31px] w-[389px] items-center border border-[#a8d0f0]/25 bg-[#d8e8fa]/15 text-black/15">
        <span className="flex h-full w-[30px] items-center justify-center border-r border-[#a0dcf0]/40 bg-[#d0ecfa]/20"><i className="size-2.5 rounded-full bg-black/10" /></span>
        <span className="pl-2.5">Απόκομμα παραθύρου</span>
      </div>
    </div>
  );
}
